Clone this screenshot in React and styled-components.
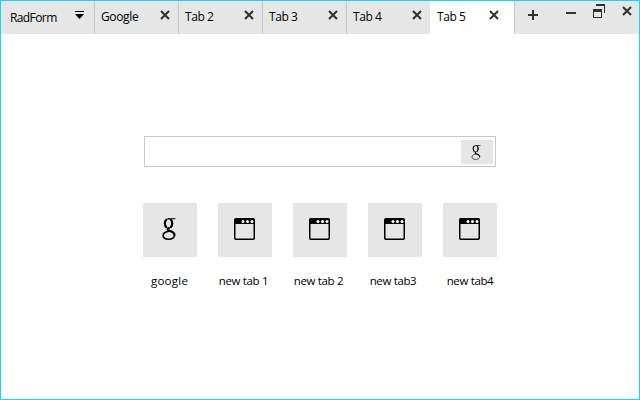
import React from "react";
import styled, { createGlobalStyle } from "styled-components";

const GlobalStyle = createGlobalStyle`
  * { box-sizing: border-box; }
  html, body { margin: 0; background: #fff; }
`;

const Window = styled.div`
  width: 640px;
  height: 400px;
  overflow: hidden;
  display: flex;
  flex-direction: column;
  border: 1px solid #1ad1ff;
  background: #fff;
  color: #000;
  font: 12px/16px "Open Sans", sans-serif;
`;

const TitleBar = styled.header`
  display: flex;
  height: 33px;
  flex: none;
  background: #e6e6e6;
`;

const FormTitle = styled.div`
  display: flex;
  width: 93px;
  padding: 9px 0 0 9px;
  justify-content: space-between;
  letter-spacing: -0.6px;
`;

const MenuIcon = styled.svg`
  width: 9px;
  height: 9px;
  margin: 1px 10px 0 0;
`;

const Tab = styled.div`
  display: flex;
  justify-content: space-between;
  width: 84px;
  border-left: 1px solid ${(p) => (p.$active ? "#fff" : "#c8c8c8")};
  padding: 8px ${(p) => (p.$active ? 15 : 8)}px 0 6px;
  background: ${(p) => (p.$active ? "#fff" : "#e6e6e6")};
  letter-spacing: ${(p) => p.$spacing}px;
`;

const CrossIcon = styled.svg`
  width: 10px;
  height: 10px;
  margin-top: ${(p) => p.$top}px;
`;

const AddTab = styled.div`
  width: 36px;
  border-left: 1px solid #c8c8c8;
  padding: 9px 0 0 13px;
`;

const BarIcon = styled.svg`
  display: block;
`;

const WindowButtons = styled.div`
  display: flex;
  flex: 1;
  align-items: flex-start;
  justify-content: flex-end;
  gap: 17px;
  padding: 3px 7px 0 0;
`;

const Page = styled.main`
  display: flex;
  flex-direction: column;
  padding: 102px 0 0 142px;
`;

const SearchBox = styled.div`
  display: flex;
  justify-content: flex-end;
  width: 352px;
  height: 31px;
  margin-left: 1px;
  padding: 3px 2px;
  border: 1px solid #c8c8c8;
`;

const SearchButton = styled.div`
  display: flex;
  align-items: center;
  justify-content: center;
  width: 32px;
  height: 24px;
  padding-right: 2px;
  background: #e6e6e6;
`;

const Logo = styled.svg`
  display: block;
  fill: none;
  stroke: #000;
  stroke-linecap: round;
`;

const Tiles = styled.div`
  display: flex;
  gap: 21px;
  margin-top: 36px;
`;

const Tile = styled.div`
  display: flex;
  flex-direction: column;
  align-items: center;
  width: 54px;
`;

const TileFace = styled.div`
  display: flex;
  align-items: center;
  justify-content: center;
  width: 54px;
  height: 54px;
  padding: 0 3px 2px 0;
  background: #e6e6e6;
`;

const TileLabel = styled.div`
  margin-top: 16px;
  padding-right: ${(p) => p.$trail || 0}px;
  font-size: 11.5px;
  letter-spacing: ${(p) => p.$spacing}px;
  white-space: nowrap;
`;

const PageIcon = styled.svg`
  width: 21px;
  height: 22px;
  margin-left: 1px;
`;

const tabs = [
  { label: "Google", spacing: -0.35 },
  { label: "Tab 2", spacing: -0.45 },
  { label: "Tab 3", spacing: -0.45 },
  { label: "Tab 4", spacing: -0.45 },
  { label: "Tab 5", spacing: -0.45, active: true },
];

const tiles = [
  { label: "google", search: true, spacing: 0.25, trail: 1 },
  { label: "new tab 1", spacing: -0.35, trail: 3 },
  { label: "new tab 2", spacing: -0.35, trail: 3 },
  { label: "new tab3", spacing: -0.35, trail: 4 },
  { label: "new tab4", spacing: -0.35, trail: 0 },
];

function Cross({ top = 1 }) {
  return (
    <CrossIcon viewBox="0 0 10 10" $top={top}>
      <path d="M1 1L9 9M9 1L1 9" stroke="#333" strokeWidth="2.1" />
    </CrossIcon>
  );
}

function SearchLogo({ width, height, light }) {
  const thin = light ? 1 : 1.1;
  const bold = light ? 1.5 : 2.2;
  return (
    <Logo width={width} height={height} viewBox="0 0 14 22">
      <ellipse cx="6.5" cy="5.4" rx="3.6" ry="4.7" strokeWidth={thin} />
      <path d="M4.2 1.8C2.4 3.2 2.5 7 4.1 9M8.9 1.8c1.8 1.8 1.7 5.4 0 7.2" strokeWidth={bold} />
      <path d="M6.5 .7H13" strokeWidth={thin} />
      <path d="M6.8 10.2C5 11 5.3 12 7.5 12.8C10.5 13.9 12.5 14.7 12.5 17" strokeWidth={bold} />
      <path d="M12.5 17C12.5 19.8 9.8 21.2 6.5 21.2C3.2 21.2 1.1 19.9 1.1 17.6C1.1 15 3.8 13.5 7.5 13.2" strokeWidth={bold - 0.6} />
    </Logo>
  );
}

function BrowserPage() {
  return (
    <PageIcon viewBox="0 0 21 22">
      <rect x=".75" y=".75" width="19.5" height="20.5" rx="1" fill="none" stroke="#000" strokeWidth="1.5" />
      <path d="M1 1h19v5H1z" />
      <circle cx="9" cy="3.5" r="1.5" fill="#fff" />
      <circle cx="13.5" cy="3.5" r="1.5" fill="#fff" />
      <circle cx="18" cy="3.5" r="1.5" fill="#fff" />
    </PageIcon>
  );
}

export default function App() {
  return (
    <>
      <GlobalStyle />
      <Window>
        <TitleBar>
          <FormTitle>
            <span>RadForm</span>
            <MenuIcon viewBox="0 0 9 9">
              <path d="M0 0h9v1H0zM0 3h9L4.5 8z" />
            </MenuIcon>
          </FormTitle>
          {tabs.map((t) => (
            <Tab key={t.label} $active={t.active} $spacing={t.spacing}>
              <span>{t.label}</span>
              <Cross />
            </Tab>
          ))}
          <AddTab>
            <BarIcon width="10" height="10">
              <path d="M0 5h10M5 0v10" stroke="#333" strokeWidth="2" />
            </BarIcon>
          </AddTab>
          <WindowButtons>
            <BarIcon width="10" height="14">
              <path d="M0 9h10" stroke="#333" strokeWidth="2" />
            </BarIcon>
            <BarIcon width="12" height="14">
              <path d="M3 0h9v9h-1V2H3zM0 5h9v9H0zM1 8v5h7V8z" fill="#333" fillRule="evenodd" />
            </BarIcon>
            <Cross top={2} />
          </WindowButtons>
        </TitleBar>
        <Page>
          <SearchBox>
            <SearchButton>
              <SearchLogo width={10} height={15} light />
            </SearchButton>
          </SearchBox>
          <Tiles>
            {tiles.map((t) => (
              <Tile key={t.label}>
                <TileFace>
                  {t.search ? <SearchLogo width={14} height={22} /> : <BrowserPage />}
                </TileFace>
                <TileLabel $spacing={t.spacing} $trail={t.trail}>{t.label}</TileLabel>
              </Tile>
            ))}
          </Tiles>
        </Page>
      </Window>
    </>
  );
}
